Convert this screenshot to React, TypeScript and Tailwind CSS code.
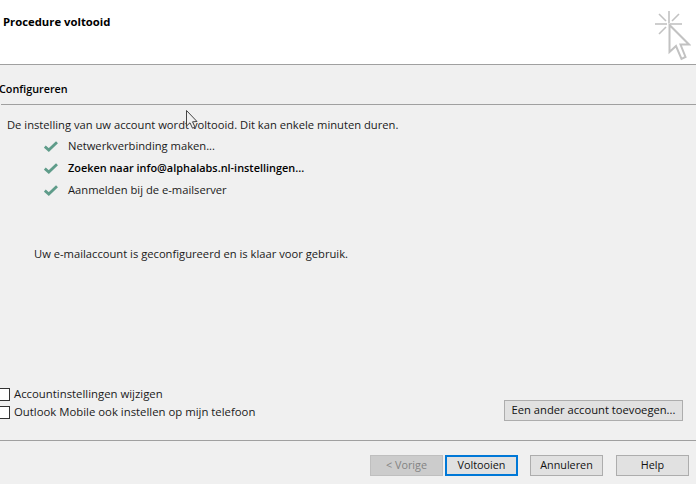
import React from "react";

function Check() {
  return (
    <svg width="14" height="11" viewBox="0 0 14 11" className="shrink-0">
      <path d="M0.800 5.500 L4.800 9 L13 1.200" fill="none" stroke="#5f9c8a" strokeWidth="2.800" />
    </svg>
  );
}

function ClickIcon() {
  return (
    <svg width="36" height="52" viewBox="0 0 36 52" fill="none" stroke="#c2c2c2">
      <g strokeWidth="1.6">
        <path d="M14 0V12" />
        <path d="M0 13H12" />
        <path d="M15 13H27" />
        <path d="M4 3L11 10" />
        <path d="M24 3L17 10" />
        <path d="M4 23L11 16" />
      </g>
      <path d="M14.500 14V41L21 35L26.500 48L30.500 46L25.500 33.500L34 33.500Z" strokeWidth="2" fill="#fff" />
    </svg>
  );
}

function Box({ label }: { label: string }) {
  return (
    <div className="flex h-[18px] items-center gap-1 -ml-[3px] text-[11.350px]">
      <span className="h-[13px] w-[13px] border border-[#333333] bg-white" />
      <span>{label}</span>
    </div>
  );
}

function Btn({ label, className }: { label: string; className?: string }) {
  return (
    <button className={"flex h-[21px] w-[73px] items-center justify-center text-[10.800px] " + (className || "border border-[#adadad] bg-[#e1e1e1] text-[#111111]")}>
      {label}
    </button>
  );
}

export default function App() {
  return (
    <div className="relative flex h-[484px] w-[696px] flex-col overflow-hidden bg-[#f0f0f0] text-[11.2px] text-[#1a1a1a] font-['Open_Sans','Noto_Sans',sans-serif]">
      <div className="flex h-[65px] shrink-0 items-start justify-between border-b border-[#a0a0a0] bg-white">
        <div className="pl-[3px] pt-[14px] text-[11.300px] font-bold text-black">Procedure voltooid</div>
        <div className="pr-[5px] pt-[11px]"><ClickIcon /></div>
      </div>

      <div className="-ml-px mt-[16px] text-[10.800px] font-semibold text-black">Configureren</div>
      <div className="ml-px mt-[7px] border-t border-[#a0a0a0]" />

      <div className="ml-[7px] mt-[12px]">De instelling van uw account wordt voltooid. Dit kan enkele minuten duren.</div>

      <div className="ml-[44px] mt-px flex flex-col">
        <div className="flex h-[22.250px] items-center gap-[10px]"><Check /><span>Netwerkverbinding maken...</span></div>
        <div className="flex h-[22.250px] items-center gap-[10px] text-[10.900px] font-semibold text-black"><Check /><span>Zoeken naar info@alphalabs.nl-instellingen...</span></div>
        <div className="flex h-[22.250px] items-center gap-[10px]"><Check /><span>Aanmelden bij de e-mailserver</span></div>
      </div>

      <div className="ml-[34px] mt-[44px]">Uw e-mailaccount is geconfigureerd en is klaar voor gebruik.</div>

      <div className="mt-auto flex items-end justify-between pr-[13px]">
        <div className="mb-[-1px] flex flex-col">
          <Box label="Accountinstellingen wijzigen" />
          <Box label="Outlook Mobile ook instellen op mijn telefoon" />
        </div>
        <button className="mb-[-1px] h-[21px] w-[179px] border border-[#adadad] bg-[#e1e1e1] text-[#111111]">Een ander account toevoegen...</button>
      </div>

      <div className="mt-[20px] border-t border-[#a0a0a0]" />

      <div className="flex h-[43px] shrink-0 items-start pl-[370px] pt-[14px]">
        <Btn label="< Vorige" className="border border-[#bfbfbf] bg-[#cccccc] text-[#838383]" />
        <Btn label="Voltooien" className="ml-[2px] border-2 border-[#0078d7] bg-[#e1e1e1] text-[#111111]" />
        <Btn label="Annuleren" className="ml-[12px] border border-[#adadad] bg-[#e1e1e1] text-[#111111]" />
        <Btn label="Help" className="ml-[13px] border border-[#adadad] bg-[#e1e1e1] text-[#111111]" />
      </div>

      <svg width="12" height="19" viewBox="0 0 12 19" className="absolute left-[186px] top-[110px]">
        <path d="M0.500 0.500V16L4 12.800L6.500 18.200L9 17L6.500 11.800L11 11.500Z" fill="#f0f0f0" stroke="#444444" strokeWidth="1" />
      </svg>
    </div>
  );
}
